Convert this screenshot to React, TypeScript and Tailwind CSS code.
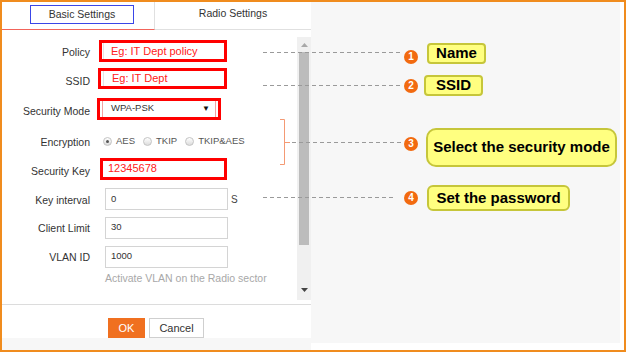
const sans = "font-['Liberation_Sans',Arial,sans-serif]";

function Radio({ checked, label }: { checked?: boolean; label: string }) {
  return (
    <div className="flex items-center gap-[4px] mr-[8px]">
      <span className="w-[9px] h-[9px] rounded-full border border-[#c4c4c4] bg-gradient-to-b from-[#ffffff] to-[#dcdcdc] flex items-center justify-center">
        {checked && <span className="w-[3px] h-[3px] rounded-full bg-[#555]" />}
      </span>
      <span className="text-[#555] text-[9.5px]">{label}</span>
    </div>
  );
}

function Row({ label, h, children }: { label: string; h: string; children?: React.ReactNode }) {
  return (
    <div className={`flex items-center ${h}`}>
      <div className="w-[88px] text-right text-[10.5px] text-[#333] pt-[3px]">{label}</div>
      {children}
    </div>
  );
}

function TextInput({ value }: { value: string }) {
  return (
    <div className="ml-[15px] w-[123px] h-[22px] border border-[#d4d4d4] bg-white flex items-center pl-[5px] text-[9.5px] text-[#333]">
      {value}
    </div>
  );
}

function Badge({ n, x, y }: { n: number; x: string; y: string }) {
  return (
    <div className={`absolute ${x} ${y} w-[14px] h-[14px] rounded-full bg-[#f26a10] text-white text-[10px] font-bold flex items-center justify-center leading-none`}>
      {n}
    </div>
  );
}

export default function App() {
  return (
    <div className={`relative w-[626px] h-[352px] border-2 border-[#f08c1e] bg-white flex overflow-hidden ${sans}`}>
      {/* dialog panel */}
      <div className="w-[309px] flex flex-col">
        <div className="h-[336px] bg-white flex flex-col">
          <div className="h-[28px] flex border-b border-[#e0e0e0]">
            <div className="w-[153px] border-r border-[#e0e0e0] border-b border-b-[#f2645a] -mb-px flex items-start pl-[28px] pt-[3px]">
              <div className="w-[104px] h-[19px] border border-[#3a46e8] flex items-center justify-center text-[10.5px] text-[#333]">
                Basic Settings
              </div>
            </div>
            <div className="flex-1 flex items-center justify-center text-[10.5px] text-[#333] pb-[3px]">Radio Settings</div>
          </div>

          <div className="flex-1 flex">
            <div className="flex-1 flex flex-col pt-[7px]">
              <Row label="Policy" h="h-[28px]">
                <div className="ml-[9px] w-[128px] h-[22px] border-[3px] border-[#ff0000] bg-white flex items-center">
                  <div className="h-full border-l border-[#e4e4e4] ml-[1px] pl-[7px] flex items-center text-[11px] text-[#ff2020]">
                    Eg: IT Dept policy
                  </div>
                </div>
              </Row>
              <Row label="SSID" h="h-[30px]">
                <div className="ml-[8px] w-[129px] h-[21px] border-[3px] border-[#ff0000] bg-white flex items-center mb-[3px]">
                  <div className="h-full border-l border-[#e4e4e4] ml-[2px] pl-[8px] flex items-center text-[11px] text-[#ff2020]">
                    Eg: IT Dept
                  </div>
                </div>
              </Row>
              <Row label="Security Mode" h="h-[31px]">
                <div className="ml-[7px] w-[124px] h-[22px] border-[3px] border-[#ff0000] bg-white flex mb-[4px]">
                  <div className="flex-1 ml-[2px] mr-[2px] border-x border-[#f4a0a0] flex items-center justify-between pl-[8px] pr-[5px]">
                    <span className="text-[9.5px] text-[#333]">WPA-PSK</span>
                    <span className="text-[8px] text-[#111]">▼</span>
                  </div>
                </div>
              </Row>
              <Row label="Encryption" h="h-[30px]">
                <div className="ml-[13px] flex items-center pt-[1px]">
                  <Radio checked label="AES" />
                  <Radio label="TKIP" />
                  <Radio label="TKIP&AES" />
                </div>
              </Row>
              <Row label="Security Key" h="h-[29px]">
                <div className="ml-[10px] w-[127px] h-[22px] border-[3px] border-[#ff0000] bg-white flex items-center pl-[5px] text-[11px] text-[#ff2020] mb-[4px]">
                  12345678
                </div>
              </Row>
              <Row label="Key interval" h="h-[28px]">
                <TextInput value="0" />
                <span className="ml-[3px] text-[10px] text-[#444]">S</span>
              </Row>
              <Row label="Client Limit" h="h-[29px]">
                <TextInput value="30" />
              </Row>
              <Row label="VLAN ID" h="h-[29px]">
                <TextInput value="1000" />
              </Row>
              <div className="h-[16px] pl-[103px] flex items-center text-[10.5px] text-[#a8a8a8]">
                Activate VLAN on the Radio sector
              </div>
            </div>

            {/* scrollbar */}
            <div className="w-[14px] mt-[7px] mb-[4px] bg-[#f0f0f0] flex flex-col items-center">
              <div className="h-[15px] flex items-center justify-center">
                <svg width="7" height="4" viewBox="0 0 7 4"><path d="M0 4 L3.5 0 L7 4 Z" fill="#a8a8a8" /></svg>
              </div>
              <div className="w-[10px] h-[193px] bg-[#bcbcbc]" />
              <div className="flex-1 flex items-end pb-[8px]">
                <svg width="7" height="4" viewBox="0 0 7 4"><path d="M0 0 L7 0 L3.5 4 Z" fill="#444" /></svg>
              </div>
            </div>
          </div>

          <div className="h-[34px] border-t border-[#dcdcdc] flex items-start pt-[13px] pl-[106px] gap-[4px]">
            <button className="w-[37px] h-[20px] bg-[#f07020] text-white text-[11px]">OK</button>
            <button className="w-[55px] h-[20px] bg-white border border-[#cfcfcf] text-[#333] text-[11px]">Cancel</button>
          </div>
        </div>
        <div className="flex-1 bg-[#f7f7f7]" />
      </div>

      {/* annotation canvas */}
      <div className="flex-1 flex flex-col">
        <div className="h-[341px] mr-[4px] bg-[#f7f7f7]" />
      </div>

      <div className="absolute -left-[2px] -top-[2px] w-[626px] h-[352px] pointer-events-none">
        <svg className="absolute left-0 top-0" width="626" height="352">
          <g stroke="#9a9a9a" strokeWidth="1" strokeDasharray="4 3">
            <line x1="263" y1="52.5" x2="401" y2="52.5" />
            <line x1="263" y1="85.5" x2="401" y2="85.5" />
            <line x1="292" y1="142.5" x2="401" y2="142.5" />
            <line x1="263" y1="197.5" x2="396" y2="197.5" />
          </g>
          <path d="M280 119.5 H284.5 V164.5 H280 M284.5 142.5 H290" stroke="#f49a74" strokeWidth="1" fill="none" />
        </svg>

        <Badge n={1} x="left-[404px]" y="top-[50px]" />
        <Badge n={2} x="left-[404px]" y="top-[79px]" />
        <Badge n={3} x="left-[404px]" y="top-[137px]" />
        <Badge n={4} x="left-[404px]" y="top-[191px]" />

        <div className="absolute left-[427px] top-[43px] w-[59px] h-[21px] rounded-[4px] border-2 border-[#c6c63a] bg-[#ffff80] flex items-center justify-center text-[15px] font-bold text-black">
          Name
        </div>
        <div className="absolute left-[424px] top-[75px] w-[59px] h-[21px] rounded-[4px] border-2 border-[#c6c63a] bg-[#ffff80] flex items-center justify-center text-[15px] font-bold text-black">
          SSID
        </div>
        <div className="absolute left-[426px] top-[128px] w-[191px] h-[39px] rounded-[10px] border-2 border-[#c6c63a] bg-[#ffff80] flex items-center justify-center text-[15px] font-bold text-black">
          Select the security mode
        </div>
        <div className="absolute left-[427px] top-[185px] w-[143px] h-[26px] rounded-[6px] border-2 border-[#c6c63a] bg-[#ffff80] flex items-center justify-center text-[15px] font-bold text-black">
          Set the password
        </div>
      </div>
    </div>
  );
}
